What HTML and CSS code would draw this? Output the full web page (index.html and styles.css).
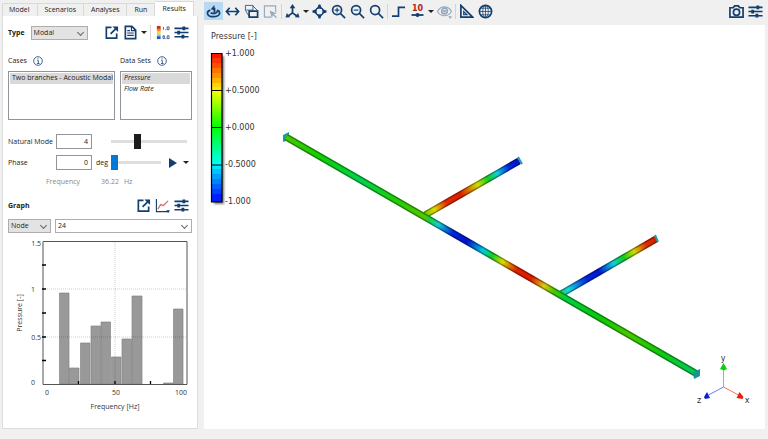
FILE: index.html
```html
<!DOCTYPE html>
<html lang="en">
<head>
<meta charset="utf-8">
<title>Results viewer</title>
<meta name="viewport" content="width=device-width, initial-scale=1">
<link rel="stylesheet" href="styles.css">
</head>
<body>
<svg class="defs" aria-hidden="true">
  <symbol id="i-export" viewBox="0 0 16 16"><path class="ln" d="M8 2.500H2.500V14H13.500V9"/><path class="ln" d="M7 9.500 13 3.500"/><path class="fl" d="M9 1.500h6v6z"/></symbol>
  <symbol id="i-sliders" viewBox="0 0 16 16"><path class="ln" d="M.500 3.500h15M.500 8h15M.500 12.500h15"/><path class="fl" d="M9 1.500h3v4H9zM3.500 6h3v4h-3zM8 10.500h3v4H8z"/></symbol>
</svg>
<div class="app">
  <aside class="side">
    <nav class="tabs" role="tablist">
      <button class="tab" role="tab">Model</button>
      <button class="tab" role="tab">Scenarios</button>
      <button class="tab" role="tab">Analyses</button>
      <button class="tab" role="tab">Run</button>
      <button class="tab tab-on" role="tab" aria-selected="true">Results</button>
    </nav>
    <section class="panel">
      <div class="row type-row">
        <label class="head" for="type">Type</label>
        <span class="drop type-drop"><select id="type"><option>Modal</option></select></span>
        <span class="tools">
          <button class="tool" aria-label="Open in window"><svg><use href="#i-export"/></svg></button>
          <button class="tool" aria-label="Report"><svg viewBox="0 0 16 16"><path class="ln" d="M2.500 1.500h7l4 4v9h-11z"/><path class="thin" d="M9 1.500v4.500h4.500M4.500 6h3M4.500 8.500h7M4.500 11h7"/></svg></button>
          <button class="caret" aria-label="Report menu"></button>
          <i class="sep"></i>
          <button class="tool" aria-label="Colour scale"><svg viewBox="0 0 16 16"><path fill="#d8291c" d="M2 1h4v4H2z"/><path fill="#f08a1c" d="M2 4h4v3H2z"/><path fill="#f5d92c" d="M2 7h4v3H2z"/><path fill="#86c8c8" d="M2 10h4v2H2z"/><path fill="#2850c8" d="M2 12h4v3H2z"/><path class="hair" d="M9 2v3M11 5h1M13 2h2v3h-2zM8.500 11.500h1.500v3H8.500zM11 14.500h1M13 11.500h2v3h-2z"/></svg></button>
          <button class="tool" aria-label="Display settings"><svg><use href="#i-sliders"/></svg></button>
        </span>
      </div>

      <div class="lists">
        <div class="listcol cases">
          <div class="listhead"><label for="cases">Cases</label><svg class="info" viewBox="0 0 10 10"><circle cx="5" cy="5" r="4.300"/><path d="M4.200 4.300H5.300V7.500M4 7.500h2.500M5 2.200v1"/></svg></div>
          <select id="cases" class="list" size="4"><option selected>Two branches - Acoustic Modal</option></select>
        </div>
        <div class="listcol sets">
          <div class="listhead"><label for="sets">Data Sets</label><svg class="info" viewBox="0 0 10 10"><circle cx="5" cy="5" r="4.300"/><path d="M4.200 4.300H5.300V7.500M4 7.500h2.500M5 2.200v1"/></svg></div>
          <select id="sets" class="list italic" size="4"><option selected>Pressure</option><option>Flow Rate</option></select>
        </div>
      </div>

      <div class="row mode-row">
        <label class="name" for="mode">Natural Mode</label>
        <input class="num" id="mode" type="text" value="4">
        <span class="unit"></span>
        <input class="range" type="range" min="0" max="9" value="3" aria-label="Natural mode slider">
      </div>
      <div class="row phase-row">
        <label class="name" for="phase">Phase</label>
        <input class="num" id="phase" type="text" value="0">
        <span class="unit">deg</span>
        <input class="range range-phase" type="range" min="0" max="360" value="0" aria-label="Phase slider">
        <button class="play" aria-label="Play"><svg viewBox="0 0 8 10"><path class="fl" d="M0 0 8 5 0 10z"/></svg></button>
        <button class="caret" aria-label="Play menu"></button>
      </div>
      <div class="row freq"><span>Frequency</span><span>36.22</span><span>Hz</span></div>

      <div class="row graph-row">
        <span class="head">Graph</span>
        <span class="tools">
          <button class="tool" aria-label="Open graph"><svg><use href="#i-export"/></svg></button>
          <button class="tool" aria-label="Plot type"><svg viewBox="0 0 16 16"><path class="thin" d="M1.500 1v13.500H15"/><path d="M3 12 6 7l3 1 5-5" fill="none" stroke="#d66a60" stroke-width="1.300"/><path class="fl" d="M12 13h4l-2 3z"/></svg></button>
          <button class="tool" aria-label="Graph settings"><svg><use href="#i-sliders"/></svg></button>
        </span>
      </div>
      <div class="row pick-row">
        <span class="drop node-drop"><select aria-label="Item kind"><option>Node</option></select></span>
        <span class="drop drop-white id-drop"><select aria-label="Item"><option>24</option></select></span>
      </div>

      <svg class="chart" viewBox="8 238 184 184" role="img" aria-label="Pressure against frequency">
        <path class="bar" d="M59.500 385V294h9.500v91zM69.500 385v-16H79v16zM80.500 385v-41H90v41zM91 385v-58h9.500v58zM101 385v-62h9.500v62zM111.500 385v-27h9.500v27zM122 385v-45h9.500v45zM132 385v-88h10v88zM163.500 385v-1H173v1zM173.500 385v-75h9.500v75z"/>
        <path class="grid" d="M43 290h144M43 338h144M115 243v142"/>
        <path class="frame" d="M43 242.500h144v143H43z"/>
        <path class="tick" d="M42 266h4M42 290h4M42 314h4M42 338h4M42 361.500h4M78.500 382v3M115 382v3M150.500 382v3"/>
        <g class="end"><text x="41" y="247">1.5</text><text x="35" y="293">1</text><text x="41" y="341">0.5</text><text x="35" y="386">0</text></g>
        <g class="mid"><text x="47" y="396">0</text><text x="116" y="396">50</text><text x="181" y="396">100</text><text x="115" y="410">Frequency [Hz]</text><text transform="translate(22 314) rotate(-90)">Pressure [-]</text></g>
      </svg>
    </section>
  </aside>

  <main class="main">
    <div class="toolbar" role="toolbar">
      <button class="tb tb-on" aria-label="Rotate"><svg viewBox="0 0 16 16"><path d="M4.500 6.500C0 8 .500 13.500 8 13.500S16 8.500 12 6.500" fill="none" stroke="#123f70" stroke-width="1.800"/><path class="ln" d="M12.500 7C11.500 10.500 8 10.500 5 9.500"/><path class="fl" d="M8.500 1v6M5 5.500 9 1v3h1v5H8V6.500z"/></svg></button>
      <button class="tb" aria-label="Pan"><svg viewBox="0 0 16 16"><path class="ln" d="M2 8h12M5 4 1.500 8 5 12M11 4l3.500 4L11 12"/></svg></button>
      <button class="tb" aria-label="Zoom window"><svg viewBox="0 0 16 16"><path class="hair" d="M1.500 1.500h8v5h-8zM9.500 2l5 5M1.500 7l4 6"/><path class="ln" d="M5.500 7.500h9v6.500h-9z"/></svg></button>
      <button class="tb pale" aria-label="Select"><svg viewBox="0 0 16 16"><path class="thin" d="M9 14H1.500V2h12v7"/><path class="fl" d="m7 7 7.500 3-3 1 3.500 3-1 1-3.500-3-1 3z"/></svg></button>
      <i class="sep"></i>
      <button class="tb" aria-label="View axes"><svg viewBox="0 0 16 16"><path class="ln" d="M8 3v6.500L3 13M8 9.500l5 3.500"/><path class="fl" d="m8 0 3 4.500H5zM.500 14.500 2 9.500l3.500 4.500zM15.500 14.500 14 9.500 10.500 14z"/></svg></button>
      <button class="caret" aria-label="View menu"></button>
      <button class="tb" aria-label="Centre"><svg viewBox="0 0 16 16"><circle class="ln" cx="8" cy="8" r="4"/><path class="fl" d="M7 .500h2l1.500 4.500h-5zM7 15.500h2l1.500-4.500h-5zM.500 7v2L5 10.500v-5zM15.500 7v2L11 10.500v-5z"/><circle cx="8" cy="8" r="3" fill="#f0f0f0"/></svg></button>
      <button class="tb" aria-label="Zoom in"><svg viewBox="0 0 16 16"><circle class="ln" cx="6.500" cy="6.500" r="4.800"/><path class="ln" d="m10 10 5 5"/><path class="thin" d="M4 6.500h5M6.500 4v5"/></svg></button>
      <button class="tb" aria-label="Zoom out"><svg viewBox="0 0 16 16"><circle class="ln" cx="6.500" cy="6.500" r="4.800"/><path class="ln" d="m10 10 5 5"/><path class="thin" d="M4 6.500h5"/></svg></button>
      <button class="tb" aria-label="Zoom fit"><svg viewBox="0 0 16 16"><circle class="ln" cx="6.500" cy="6.500" r="4.800"/><path class="ln" d="m10 10 5 5"/></svg></button>
      <i class="sep"></i>
      <button class="tb" aria-label="Pipe"><svg viewBox="0 0 16 16"><path class="ln" d="M1 13h7V3.500h7"/></svg></button>
      <button class="tb ten" aria-label="Values"><span>10</span><svg viewBox="0 0 14 4"><path class="ln" d="M1 2h12"/><circle class="fl" cx="7" cy="2" r="2"/></svg></button>
      <button class="caret" aria-label="Values menu"></button>
      <button class="tb pale" aria-label="Visibility"><svg viewBox="0 0 16 16"><path class="thin" d="M.500 8C4 1.500 12 1.500 15.500 8 12 14 4 14 .500 8z"/><circle class="ln" cx="8" cy="7.500" r="3"/><circle class="fl" cx="8" cy="7.500" r="1.500"/><path class="fl" d="M12 13h4l-2 3z"/></svg></button>
      <i class="sep"></i>
      <button class="tb" aria-label="Measure"><svg viewBox="0 0 16 16"><path class="ln" d="M2 1.500V14h12.500z"/><path class="thin" d="M5 8v3.500h3.500z"/></svg></button>
      <button class="tb" aria-label="Globe"><svg viewBox="0 0 16 16"><circle class="ln" cx="8" cy="8" r="6.500"/><ellipse class="hair" cx="8" cy="8" rx="3" ry="6.500"/><path class="hair" d="M8 1v14M1 8h14M2.500 4.500h11M2.500 11.500h11"/></svg></button>
      <span class="grow"></span>
      <button class="tb" aria-label="Snapshot"><svg viewBox="0 0 16 16"><path class="ln" d="M1 4h3.500L6 2h4l1.500 2H15v10H1z"/><circle class="ln" cx="8" cy="8.700" r="3.300"/></svg></button>
      <button class="tb" aria-label="View settings"><svg><use href="#i-sliders"/></svg></button>
    </div>
    <div class="view">
      <svg class="scene" viewBox="204 25 561 404" preserveAspectRatio="xMinYMin meet" role="img" aria-label="Pipe model coloured by pressure">
        <defs>
          <linearGradient id="gm" gradientUnits="userSpaceOnUse" x1="286" y1="137" x2="698" y2="375">
            <stop offset="0" stop-color="#46c800"/><stop offset=".08" stop-color="#14cd05"/><stop offset=".18" stop-color="#00d24b"/><stop offset=".26" stop-color="#1ecd0a"/><stop offset=".335" stop-color="#50c800"/><stop offset=".35" stop-color="#14d246"/><stop offset=".37" stop-color="#14cdd2"/><stop offset=".405" stop-color="#0023dc"/><stop offset=".44" stop-color="#0014d2"/><stop offset=".478" stop-color="#00cddc"/><stop offset=".5" stop-color="#0fcd28"/><stop offset=".525" stop-color="#d7dc00"/><stop offset=".56" stop-color="#e11e00"/><stop offset=".595" stop-color="#dc1e00"/><stop offset=".626" stop-color="#dcc814"/><stop offset=".65" stop-color="#46c800"/><stop offset=".68" stop-color="#00cd3c"/><stop offset=".76" stop-color="#0ac80a"/><stop offset=".83" stop-color="#46c800"/><stop offset=".9" stop-color="#14c80a"/><stop offset="1" stop-color="#00c85f"/>
          </linearGradient>
          <linearGradient id="ga" gradientUnits="userSpaceOnUse" x1="425" y1="215" x2="519" y2="161">
            <stop offset="0" stop-color="#64c800"/><stop offset=".1" stop-color="#dcdc00"/><stop offset=".23" stop-color="#e12800"/><stop offset=".38" stop-color="#dc1e00"/><stop offset=".56" stop-color="#d2dc00"/><stop offset=".67" stop-color="#0fcd1e"/><stop offset=".77" stop-color="#0fcddc"/><stop offset=".89" stop-color="#0028dc"/><stop offset="1" stop-color="#0014c8"/>
          </linearGradient>
          <linearGradient id="gb" gradientUnits="userSpaceOnUse" x1="561" y1="294" x2="656" y2="239">
            <stop offset="0" stop-color="#14cd78"/><stop offset=".08" stop-color="#14d7dc"/><stop offset=".27" stop-color="#0028dc"/><stop offset=".4" stop-color="#0014d2"/><stop offset=".55" stop-color="#14cddc"/><stop offset=".66" stop-color="#0fcd1e"/><stop offset=".77" stop-color="#d2dc00"/><stop offset=".9" stop-color="#e12800"/><stop offset="1" stop-color="#d21e00"/>
          </linearGradient>
          <linearGradient id="q2" x2="0" y2="1"><stop stop-color="#ff0"/><stop offset="1" stop-color="#0f0"/></linearGradient>
          <linearGradient id="q3" x2="0" y2="1"><stop stop-color="#0f0"/><stop offset="1" stop-color="#0ff"/></linearGradient>
          <filter id="soft" x="-50%" y="-10%" width="200%" height="120%"><feGaussianBlur stdDeviation="1"/></filter>
        </defs>

        <text class="vt" x="211" y="39">Pressure [-]</text>
        <path d="M214 56h10v148h-10z" fill="#777" filter="url(#soft)"/>
        <g>
          <path fill="#ff1400" d="M211 53h11v5h-11z"/><path fill="#ff3200" d="M211 58h11v5h-11z"/><path fill="#ff5000" d="M211 63h11v5h-11z"/><path fill="#ff7300" d="M211 68h11v5h-11z"/><path fill="#ff9100" d="M211 73h11v5h-11z"/><path fill="#ffb400" d="M211 78h11v5h-11z"/><path fill="#ffd200" d="M211 83h11v4h-11z"/><path fill="#ffe600" d="M211 87h11v4h-11z"/>
          <path fill="url(#q2)" d="M211 90h11v37h-11z"/><path fill="url(#q3)" d="M211 127h11v38h-11z"/>
          <path fill="#00e6ff" d="M211 165h11v5h-11z"/><path fill="#00c3ff" d="M211 169h11v5h-11z"/><path fill="#00a0ff" d="M211 174h11v5h-11z"/><path fill="#0082ff" d="M211 179h11v5h-11z"/><path fill="#005fff" d="M211 184h11v5h-11z"/><path fill="#0041ff" d="M211 189h11v5h-11z"/><path fill="#001eff" d="M211 194h11v8h-11z"/>
          <path d="M211.500 53.500h10.500v148.500h-10.500zM211 90.500h11M211 127.500h11M211 165h11" fill="none" stroke="#000" stroke-width="1.200"/>
        </g>
        <g class="vt"><text x="225" y="56">+1.000</text><text x="225" y="93">+0.5000</text><text x="225" y="130">+0.000</text><text x="225" y="167">-0.5000</text><text x="225" y="204">-1.000</text></g>

        <path fill="#14a0a8" d="m283 135 6-3v8l-6 2z"/>
        <g fill="none">
          <path class="pipe" stroke="url(#ga)" d="M425 215 519 161"/><path class="dark" d="M425 215 519 161"/><path class="core" stroke="url(#ga)" d="M425 215 519 161"/>
          <path class="pipe" stroke="url(#gb)" d="M561 294 656 239"/><path class="dark" d="M561 294 656 239"/><path class="core" stroke="url(#gb)" d="M561 294 656 239"/>
          <path class="pipe" stroke="url(#gm)" d="M286 137 697 374"/><path class="dark" d="M286 137 697 374"/><path class="core" stroke="url(#gm)" d="M286 137 697 374"/>
          <path d="m518 157 4 7M655 235l3 7" stroke="#14a0b0" stroke-width="2"/>
        </g>
        <path fill="#149696" d="m693 372 7-3v7l-6 3z"/>

        <g fill="none" stroke-width="1"><path stroke="#5ae65a" d="M723.500 387v-20"/><path stroke="#ff6e64" d="m723.500 387 15 8"/><path stroke="#6e78f5" d="m723.500 387-15 8"/></g>
        <path fill="#0fcd0f" d="m723.500 363 3.500 6-3 1.500-4-1.500z"/><path fill="#e61e0a" d="m739.500 392 4 5-1 2-6-1z"/><path fill="#0f1ed2" d="m707 392 3 6-5 1-1-2z"/>
        <g class="axis"><text x="723" y="361">y</text><text x="747" y="403">x</text><text x="699" y="403">z</text></g>
      </svg>
    </div>
  </main>
</div>
</body>
</html>
```

FILE: styles.css
```css
* { box-sizing: border-box; }

body {
  margin: 0;
  background: #f0f0f0;
  color: #222;
  font: 7px/10px "Open Sans", "Noto Sans", sans-serif;
}

button, input, select {
  margin: 0;
  padding: 0;
  border: 0;
  border-radius: 0;
  background: none;
  color: inherit;
  font: inherit;
}

.defs { position: absolute; width: 0; height: 0; }
.ln { fill: none; stroke: #123f70; stroke-width: 1.8; }
.thin { fill: none; stroke: #123f70; stroke-width: 1.2; }
.hair { fill: none; stroke: #123f70; stroke-width: 0.8; }
.fl { fill: #123f70; }

.app {
  display: flex;
  gap: 6px;
  min-height: 100vh;
  padding: 0 3px 11px 2px;
}

/* Side panel */
.side {
  display: flex;
  flex-direction: column;
  flex: 0 0 196px;
}
.tabs {
  display: flex;
  align-items: flex-end;
  height: 16px;
}
.tab {
  height: 13px;
  padding: 0 7px;
  border: 1px solid #d9d9d9;
  border-width: 1px 1px 0 0;
}
.tab:first-child { padding-left: 6px; border-left-width: 1px; }
.tab-on {
  height: 15px;
  border-left-width: 0;
  background: #fff;
}
.panel {
  flex: 1;
  padding: 9px 5px 4px;
  border: 1px solid #dcdcdc;
  border-top: 0;
  background: #fff;
}
.row { display: flex; align-items: center; }
.head { font-weight: 700; }
.tools {
  display: flex;
  align-items: center;
  margin-left: auto;
  margin-right: 3px;
  gap: 4px;
}
.tool, .tool svg { display: block; width: 15px; height: 15px; }
.caret {
  display: flex;
  align-items: center;
  justify-content: center;
  width: 8px;
  height: 14px;
}
.tools .caret { margin: 0 -2px; }
.caret::before {
  content: "";
  border: 3px solid transparent;
  border-top-color: #222;
  border-bottom: 0;
}
.sep { width: 1px; height: 15px; background: #d4d4d4; }

.drop {
  position: relative;
  display: flex;
  height: 14px;
  border: 1px solid #adadad;
  background: #e3e3e3;
}
.drop select { width: 100%; padding-left: 2px; appearance: none; }
.drop::after {
  content: "";
  position: absolute;
  top: 3px;
  right: 4px;
  width: 4px;
  height: 4px;
  border: solid #666;
  border-width: 0 1px 1px 0;
  transform: rotate(45deg);
  pointer-events: none;
}
.drop-white { background: #fff; }
.type-drop { width: 57px; margin-left: 6px; }
.node-drop { width: 43px; }
.id-drop { flex: 1; }

.lists { display: flex; gap: 5px; margin-top: 15px; }
.cases { flex: 107; }
.sets { flex: 72; }
.listcol { min-width: 0; }
.listhead { display: flex; align-items: center; gap: 6px; height: 12px; }
.info { width: 10px; height: 10px; fill: none; stroke: #123f70; stroke-width: 0.8; }
.list {
  display: block;
  width: 100%;
  height: 49px;
  margin-top: 4px;
  padding: 1px;
  border: 1px solid #8f959b;
  background: #fff;
  overflow: hidden;
}
.list option { min-height: 11px; padding: 0 2px; line-height: 11px; color: #222; }
.list option:checked { background: #d9d9d9 linear-gradient(#d9d9d9, #d9d9d9); color: #222; }
.italic { font-style: italic; }

.mode-row { margin-top: 14px; }
.phase-row { margin-top: 6px; }
.name { width: 48px; }
.num {
  width: 36px;
  height: 15px;
  padding: 0 3px;
  border: 1px solid #8f959b;
  text-align: right;
}
.unit { width: 19px; padding-left: 4px; }
.range {
  width: 76px;
  height: 15px;
  appearance: none;
}
.range-phase { width: 50px; }
.range::-webkit-slider-runnable-track { height: 3px; background: #dedede; }
.range::-webkit-slider-thumb {
  width: 7px;
  height: 15px;
  margin-top: -6px;
  appearance: none;
  background: #1c1c1c;
}
.range-phase::-webkit-slider-thumb { background: #0078d7; }
.play { width: 8px; height: 10px; margin: 0 5px 0 8px; }
.play svg { display: block; width: 8px; height: 10px; }
.freq { margin: 7px 0 0 38px; color: #888; }
.freq span:nth-child(2) { margin: 0 5px 0 21px; }
.graph-row { margin-top: 11px; }
.pick-row { gap: 4px; margin-top: 6px; }

.chart { display: block; width: 100%; margin-top: 4px; font-size: 7px; fill: #333; }
.bar { fill: #999; stroke: #858585; stroke-width: 0.7; }
.grid { fill: none; stroke: #000; stroke-opacity: 0.2; stroke-dasharray: 1 1; }
.frame { fill: none; stroke: #555; }
.tick { stroke: #000; stroke-width: 1.3; }
.end { text-anchor: end; }
.mid { text-anchor: middle; }

/* Viewer */
.main { display: flex; flex: 1; flex-direction: column; min-width: 0; }
.toolbar { display: flex; align-items: center; height: 25px; padding-bottom: 3px; }
.tb {
  display: flex;
  flex: 0 0 19px;
  flex-direction: column;
  align-items: center;
  justify-content: center;
  height: 18px;
}
.tb svg { width: 15px; height: 15px; }
.tb-on { background: #b9d9f2; }
.pale { opacity: 0.4; }
.ten { color: #b02418; font: 700 8px/8px "DejaVu Sans", sans-serif; }
.ten svg { height: 4px; }
.toolbar .sep { margin: 0 1px; }
.grow { flex: 1; }
.view { flex: 1; background: #fff; }
.scene { display: block; width: 100%; }
.vt { fill: #333; font: 8px "DejaVu Sans", sans-serif; }
.pipe { stroke-width: 7; }
.dark { stroke: #000; stroke-opacity: 0.35; stroke-width: 7; }
.core { stroke-width: 4; }
.axis { fill: #333; font: 8px "DejaVu Sans", sans-serif; text-anchor: middle; }
```
